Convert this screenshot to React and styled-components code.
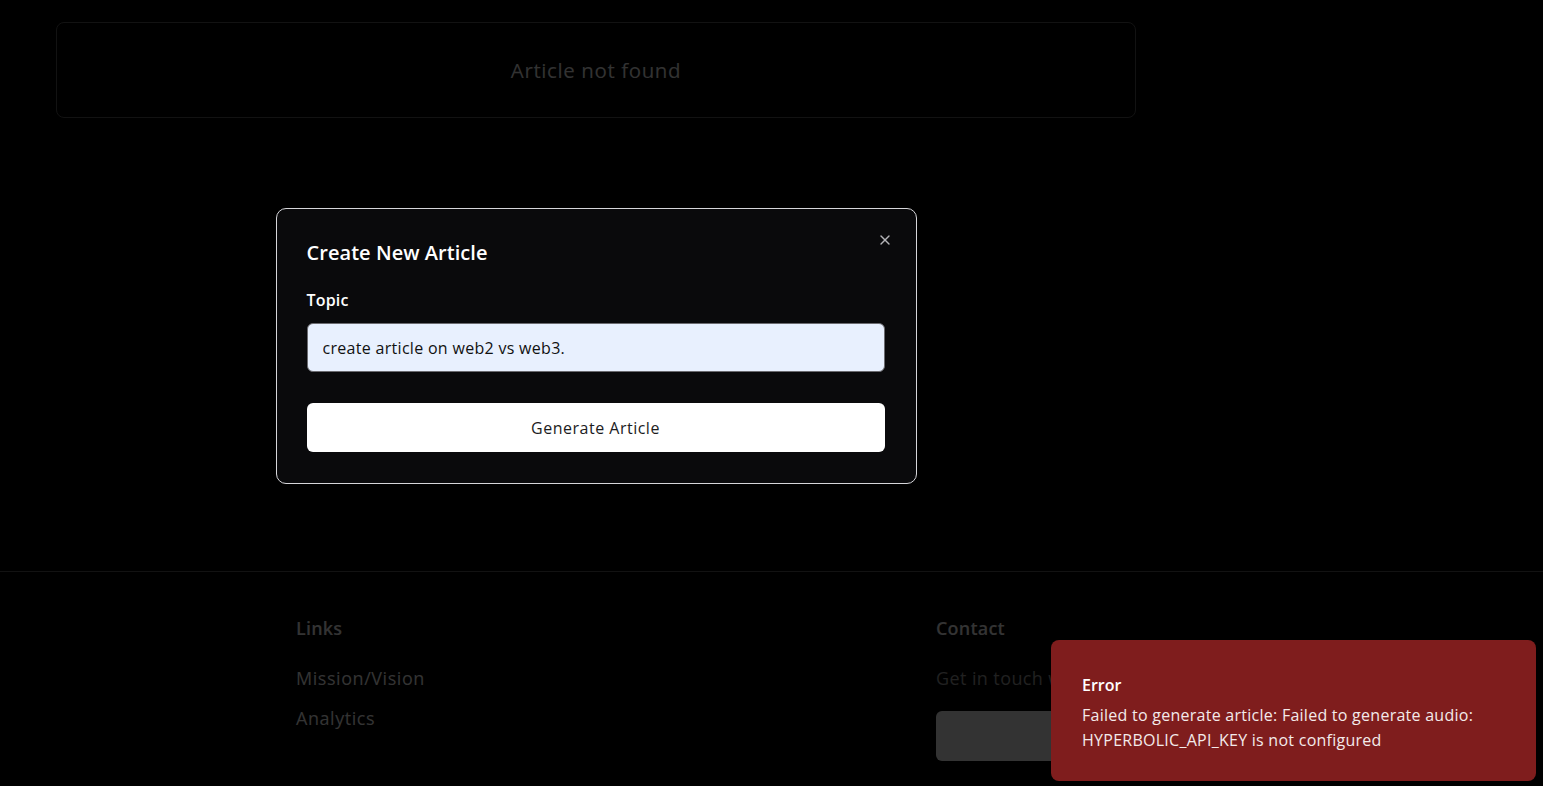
import React from "react";
import styled, { createGlobalStyle } from "styled-components";

const Global = createGlobalStyle`
  html, body { margin: 0; padding: 0; background: #000; }
  body { font-family: "Open Sans", "Noto Sans", sans-serif; color: #fafafa; }
  * { box-sizing: border-box; }
`;

const Page = styled.div`
  min-height: 786px;
  display: flex;
  flex-direction: column;
  background: #000;
`;

const Main = styled.main`
  padding: 22px 0 0 56px;
  height: 571px;
`;

const Card = styled.div`
  width: 1080px;
  height: 96px;
  border: 1px solid #5a5a5a;
  border-radius: 8px;
  display: flex;
  align-items: center;
  justify-content: center;
  font-size: 20.5px;
  letter-spacing: 0.6px;
  color: #fafafa;
`;

const Footer = styled.footer`
  border-top: 1px solid #5a5a5a;
  padding: 43px 0 0 296px;
  display: grid;
  grid-template-columns: 640px 320px;
`;

const Col = styled.div`
  display: flex;
  flex-direction: column;
`;

const ColTitle = styled.div`
  font-size: 18px;
  font-weight: 600;
  line-height: 26px;
  letter-spacing: 0.2px;
  color: #fff;
  margin-bottom: 24px;
`;

const FooterLink = styled.div`
  font-size: 18px;
  line-height: 26px;
  letter-spacing: 0.55px;
  color: #fff;
  margin-bottom: 14px;
`;

const Muted = styled.div`
  font-size: 18px;
  line-height: 26px;
  letter-spacing: 0.4px;
  color: #a3a3a3;
  margin-bottom: 20px;
  white-space: nowrap;
`;

const ContactButton = styled.div`
  width: 200px;
  height: 50px;
  border-radius: 6px;
  background: #fff;
`;

const Overlay = styled.div`
  position: fixed;
  inset: 0;
  background: rgba(0, 0, 0, 0.8);
  z-index: 10;
`;

const DialogArea = styled.div`
  width: 1192px;
  height: 692px;
  display: grid;
  place-items: center;
`;

const Dialog = styled.div`
  position: relative;
  width: 641px;
  background: #0a0a0c;
  border: 1px solid #d6d6da;
  border-radius: 10px;
  padding: 30px 31px 31px 30px;
  display: flex;
  flex-direction: column;
`;

const Title = styled.h2`
  margin: 0;
  font-size: 20px;
  font-weight: 600;
  line-height: 28px;
  color: #fff;
  letter-spacing: 0.05px;
`;

const Close = styled.button`
  position: absolute;
  top: 23px;
  right: 23px;
  width: 16px;
  height: 16px;
  padding: 0;
  border: none;
  background: transparent;
  color: #b4b4b8;
  display: flex;
  cursor: pointer;
`;

const Label = styled.label`
  margin-top: 21px;
  font-size: 16px;
  font-weight: 600;
  line-height: 24px;
  letter-spacing: 0.2px;
  color: #fff;
`;

const Input = styled.input`
  margin-top: 11px;
  height: 49px;
  border: 1px solid #6b6b70;
  border-radius: 6px;
  background: #e8f0fe;
  padding: 0 15px;
  font-family: inherit;
  font-size: 16px;
  letter-spacing: 0.3px;
  color: #111;
  outline: none;
`;

const Primary = styled.button`
  margin-top: 31px;
  height: 49px;
  border: none;
  border-radius: 6px;
  background: #fff;
  font-family: inherit;
  font-size: 16px;
  font-weight: 500;
  letter-spacing: 0.5px;
  color: #1c1c1e;
  cursor: pointer;
`;

const Toast = styled.div`
  position: fixed;
  right: 7px;
  bottom: 5px;
  width: 485px;
  height: 141px;
  background: #7f1d1d;
  border-radius: 8px;
  padding: 33px 31px 0 31px;
  z-index: 20;
  color: #fff;
`;

const ToastTitle = styled.div`
  font-size: 16px;
  font-weight: 600;
  line-height: 24px;
`;

const ToastText = styled.div`
  margin-top: 6px;
  font-size: 16px;
  line-height: 25px;
  letter-spacing: 0.26px;
  color: #f3eaea;
  max-width: 410px;
`;

export default function App() {
  return (
    <>
      <Global />
      <Page>
        <Main>
          <Card>Article not found</Card>
        </Main>
        <Footer>
          <Col>
            <ColTitle>Links</ColTitle>
            <FooterLink>Mission/Vision</FooterLink>
            <FooterLink>Analytics</FooterLink>
          </Col>
          <Col>
            <ColTitle>Contact</ColTitle>
            <Muted>Get in touch with us</Muted>
            <ContactButton />
          </Col>
        </Footer>
      </Page>
      <Overlay>
        <DialogArea>
          <Dialog>
            <Title>Create New Article</Title>
            <Close aria-label="Close">
              <svg width="16" height="16" viewBox="0 0 24 24" fill="none" stroke="currentColor" strokeWidth="2" strokeLinecap="round" strokeLinejoin="round">
                <path d="M18 6 6 18" />
                <path d="m6 6 12 12" />
              </svg>
            </Close>
            <Label htmlFor="topic">Topic</Label>
            <Input id="topic" defaultValue="create article on web2 vs web3." />
            <Primary>Generate Article</Primary>
          </Dialog>
        </DialogArea>
      </Overlay>
      <Toast>
        <ToastTitle>Error</ToastTitle>
        <ToastText>
          Failed to generate article: Failed to generate audio: HYPERBOLIC_API_KEY is not configured
        </ToastText>
      </Toast>
    </>
  );
}
